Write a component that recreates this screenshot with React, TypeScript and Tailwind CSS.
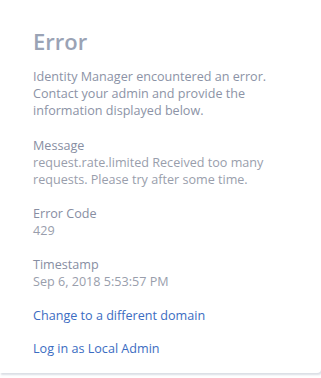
export default function App() {
    return (
        <div className="min-h-[378px] bg-white" style={{ fontFamily: '"Open Sans", sans-serif' }}>
            <section className="h-[373px] rounded-br-[4px] bg-white shadow-[1px_2px_2px_rgba(150,160,180,0.35)]">
                <div className="flex flex-col pl-[33px] pt-[25px] text-[12.6px] leading-[17px]">
                    <h1 className="text-[22px] leading-[32px] font-semibold text-[#9aa3b5]">Error</h1>
                    <p className="mt-[11px] text-[#8c93a6]">
                        Identity Manager encountered an error.
                        <br />
                        Contact your admin and provide the
                        <br />
                        information displayed below.
                    </p>
                    <div className="mt-[18px]">
                        <div className="text-[#878ea2]">Message</div>
                        <div className="text-[#999eac]">
                            request.rate.limited Received too many
                            <br />
                            requests. Please try after some time.
                        </div>
                    </div>
                    <div className="mt-[17px]">
                        <div className="text-[#878ea2]">Error Code</div>
                        <div className="text-[#999eac]">429</div>
                    </div>
                    <div className="mt-[17px]">
                        <div className="text-[#878ea2]">Timestamp</div>
                        <div className="text-[#999eac]">Sep 6, 2018 5:53:57 PM</div>
                    </div>
                    <a className="mt-[17px] text-[#3b6cc2]" href="#">Change to a different domain</a>
                    <a className="mt-[16px] text-[#3b6cc2]" href="#">Log in as Local Admin</a>
                </div>
            </section>
        </div>
    );
}
